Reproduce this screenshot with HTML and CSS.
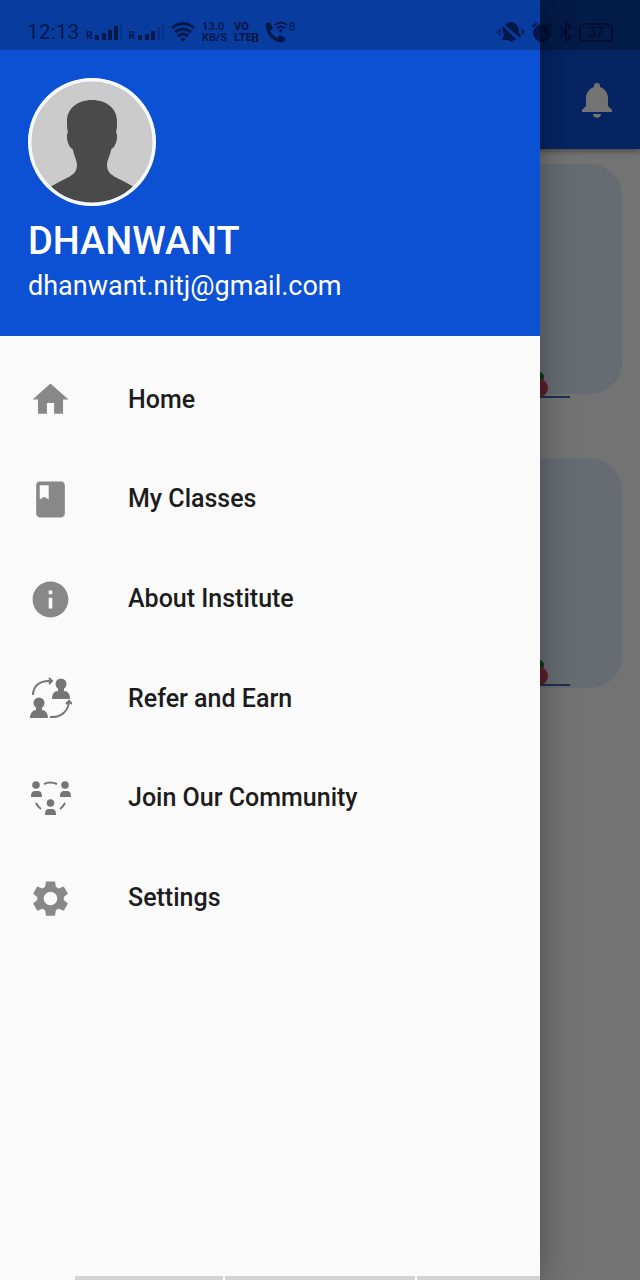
FILE: index.html
```
<!DOCTYPE html>
<html lang="en">
<head>
<meta charset="utf-8">
<meta name="viewport" content="width=device-width, initial-scale=1">
<title>Navigation drawer</title>
<link rel="stylesheet" href="styles.css">
</head>
<body>
<div class="screen">
  <main class="page">
    <header class="appbar">
      <button class="bell" type="button" aria-label="Notifications">
        <svg viewBox="0 0 30 36" width="30" height="36"><path d="M15 1a3 3 0 0 1 3 3v1c5 2 8 6 8 11v8l4 4v2H0v-2l4-4v-8C4 11 7 7 12 5V4a3 3 0 0 1 3-3zM11 32h8c0 5-8 5-8 0z"/></svg>
      </button>
    </header>
    <div class="cards">
      <section class="card">
        <svg class="card-art low" viewBox="0 0 40 30" width="40" height="30"><circle class="leaf" cx="9" cy="7" r="5"/><ellipse class="fruit" cx="10" cy="18" rx="8" ry="9"/><path class="shelf" d="M8 27h32"/></svg>
      </section>
      <section class="card">
        <svg class="card-art" viewBox="0 0 40 30" width="40" height="30"><circle class="leaf" cx="9" cy="7" r="5"/><ellipse class="fruit" cx="10" cy="18" rx="8" ry="9"/><path class="shelf" d="M8 27h32"/></svg>
      </section>
    </div>
  </main>

  <div class="scrim"></div>

  <aside class="drawer">
    <header class="profile">
      <svg class="avatar" viewBox="0 0 128 128" width="128" height="128">
        <defs><clipPath id="face"><circle cx="64" cy="64" r="62"/></clipPath></defs>
        <circle class="avatar-bg" cx="64" cy="64" r="64"/>
        <circle class="avatar-fill" cx="64" cy="64" r="61"/>
        <path class="avatar-person" clip-path="url(#face)" d="M64 22C49 22 39 31 39 43c0 5 0 8 1 11-2 3-1 9 1 13 1 3 3 3 4 5 1 6 4 10 4 15 0 8-6 11-12 14-6 3-10 5-15 8v20h84v-20c-5-3-9-5-15-8-6-3-12-6-12-14 0-5 3-9 4-15 1-2 3-2 4-5 2-4 3-10 1-13 1-3 1-6 1-11C89 31 79 22 64 22z"/>
        <circle class="avatar-ring" cx="64" cy="64" r="62"/>
      </svg>
      <h1 class="name">DHANWANT</h1>
      <p class="email">dhanwant.nitj@gmail.com</p>
    </header>
    <nav class="menu" aria-label="Main">
      <a class="item" href="#home">
        <svg class="icon" viewBox="0 0 24 24"><path d="M10 20v-6h4v6h5v-8h3L12 3 2 12h3v8z"/></svg>
        <span>Home</span>
      </a>
      <a class="item" href="#classes">
        <svg class="icon" viewBox="0 0 24 24"><path d="M18 2H6c-1.100 0-2 .9-2 2v16c0 1.100.9 2 2 2h12c1.100 0 2-.9 2-2V4c0-1.100-.9-2-2-2zM6 4h5v8l-2.500-1.500L6 12V4z"/></svg>
        <span>My Classes</span>
      </a>
      <a class="item" href="#about">
        <svg class="icon" viewBox="0 0 24 24"><path d="M12 2C6.480 2 2 6.480 2 12s4.480 10 10 10 10-4.480 10-10S17.520 2 12 2zm1 15h-2v-6h2v6zm0-8h-2V7h2v2z"/></svg>
        <span>About Institute</span>
      </a>
      <a class="item" href="#refer">
        <svg class="icon dark" viewBox="0 0 43 43"><circle cx="32" cy="7" r="5.500"/><path d="M29 10h6v4c4 0 6 3 6 8H23c0-5 2-8 6-8zM7 29h6v4c3 0 6 3 6 8H1c0-5 3-8 6-8z"/><circle cx="10" cy="26" r="5.500"/><path class="line" d="M4 18C4 9 11 3 22 4M20 1l3 3-3 3M21 40c10 1 18-5 19-15M37 27l3-3 3 3"/></svg>
        <span>Refer and Earn</span>
      </a>
      <a class="item" href="#community">
        <svg class="icon dark" viewBox="0 0 43 43"><circle cx="7" cy="8" r="3.800"/><circle cx="36" cy="8" r="3.800"/><circle cx="21.500" cy="26" r="3.800"/><path d="M2 20c0-4 1-6 4-6h3c3 0 4 2 4 6zM31 20c0-4 1-6 4-6h3c3 0 4 2 4 6zM16 38c0-4 1-6 4-6h3c3 0 4 2 4 6z"/><path class="line" d="M15 7q6-3 13 0M7 26q2 4 5 6M36 26q-2 4-5 6"/></svg>
        <span>Join Our Community</span>
      </a>
      <a class="item" href="#settings">
        <svg class="icon" viewBox="0 0 24 24"><path fill-rule="evenodd" d="M9.500 2.500h5l.5 3 1.500.9 2.900-1.100 2.300 4-2.300 1.900v1.700l2.300 1.900-2.300 4-2.900-1.100-1.500.9-.5 3h-5l-.5-3-1.500-.9-2.900 1.100-2.300-4 2.300-1.900v-1.700L2.300 9.300l2.300-4 2.900 1.100L9 5.500zM12 8.200a3.800 3.800 0 1 0 0 7.600 3.800 3.800 0 0 0 0-7.600z"/></svg>
        <span>Settings</span>
      </a>
    </nav>
    <div class="keys"><i class="key"></i><i class="key wide"></i><i class="key rest"></i></div>
  </aside>

  <div class="statusbar">
    <div class="status-left">
      <span class="clock">12:13</span>
      <span class="signal"><small>R</small><svg viewBox="0 0 29 18" width="29" height="18"><path d="M2 12h4v5H2zM9 10h4v7H9zM15 7h4v10h-4zM21 3h4v14h-4z"/><path class="faint" d="M27 0h2v17h-2z"/></svg></span>
      <span class="signal"><small>R</small><svg viewBox="0 0 29 18" width="29" height="18"><path d="M3 12h4v5H3zM10 11h4v6h-4zM16 8h4v9h-4z"/><path class="faint" d="M22 4h3v13h-3zM27 0h2v17h-2z"/></svg></span>
      <svg viewBox="0 0 24 20" width="24" height="20"><path class="stroke heavy" d="M1 6q11-9 22 0M4 10q8-6 16 0M7 14q5-4 10 0"/><path d="M9 17q3-2 6 0l-3 3z"/></svg>
      <span class="tiny"><span>13.0</span><span>KB/S</span></span>
      <span class="tiny bold"><span>VO</span><span class="lte">LTE<svg viewBox="0 0 6 9" width="6" height="9"><path fill-rule="evenodd" d="M0 0h6v9H0zM2 1v3h2V1zM2 5v3h2V5z"/></svg></span></span>
      <svg viewBox="0 0 32 22" width="32" height="22"><path d="M1 2l4-1 3 6-3 3q3 5 7 7l3-3 6 3-2 4C9 23-1 12 1 2z"/><path class="stroke" d="M10 4q6-5 12 0M12 7q4-3 8 0"/><path d="M14 9q2-2 4 0l-2 3z"/><path class="thin" d="M25 2h4v7h-4zM25 5h4"/></svg>
    </div>
    <div class="status-right">
      <svg viewBox="0 0 28 22" width="28" height="22"><path d="M9 3q5-4 10 0 3 3 3 8l2 5-1 1L8 4zM6 5l14 14h-3q-3 3-6 0H5l2-5q-2-5-1-9z"/><path class="thin" d="M1 9v4M3 7v8M25 7v7M27 9v4"/></svg>
      <svg viewBox="0 0 22 22" width="22" height="22"><path fill-rule="evenodd" d="M11 3a9 9 0 1 1 0 18 9 9 0 0 1 0-18zm-1 4v6l5 3 1-1-4-3V7z"/><path class="stroke" d="M1 6l5-4M21 6l-5-4"/></svg>
      <svg viewBox="0 0 14 22" width="14" height="22"><path class="stroke" d="M1 6l11 10-5 4V2l5 4L1 16"/></svg>
      <span class="battery">37</span>
    </div>
  </div>
</div>
</body>
</html>
```
FILE: styles.css
```
* { box-sizing: border-box; }
body {
  margin: 0;
  background: #fafafa;
  font-family: Roboto, "Liberation Sans", sans-serif;
}
h1, p { margin: 0; }
svg { display: block; }

.screen {
  position: relative;
  min-height: 100vh;
  overflow: hidden;
}

/* Page under the drawer */
.appbar {
  display: flex;
  align-items: flex-end;
  justify-content: flex-end;
  height: 149px;
  padding: 0 28px 31px 0;
  background: #0c50d4;
  box-shadow: 0 2px 6px rgba(0, 0, 0, .4);
}
.bell { padding: 0; border: 0; background: none; fill: #fafafa; }
.cards {
  display: grid;
  gap: 64px;
  padding: 15px 18px;
}
.card {
  display: flex;
  align-items: flex-end;
  justify-content: flex-end;
  height: 230px;
  padding-right: 52px;
  border-radius: 32px;
  background: #e0ebfa;
}
.card-art.low { margin-bottom: -6px; }
.leaf { fill: #1c7a3c; }
.fruit { fill: #c8405c; }
.shelf { stroke: #4468b8; stroke-width: 2; }

.scrim {
  position: absolute;
  inset: 0;
  background: rgba(0, 0, 0, .54);
}

/* Drawer */
.drawer {
  position: absolute;
  top: 0;
  bottom: 0;
  left: 0;
  display: flex;
  flex-direction: column;
  width: calc(100% - 100px);
  background: #fafafa;
  box-shadow: 0 0 32px rgba(0, 0, 0, .35);
}
.profile {
  padding: 78px 28px 34px;
  background: #0c50d4;
  color: #fff;
}
.avatar-bg { fill: #fff; }
.avatar-fill { fill: #cbcbcb; }
.avatar-person { fill: #4a4a4a; }
.avatar-ring { fill: none; stroke: #f4f8ff; stroke-width: 3; }
.name {
  margin-top: 12px;
  font-size: 38px;
  font-weight: 500;
  line-height: 46px;
}
.email {
  margin-top: 6px;
  font-size: 27px;
  line-height: 32px;
}
.menu {
  display: grid;
  grid-auto-rows: 1fr;
  height: 598px;
  margin-top: 14px;
}
.item {
  display: grid;
  grid-template-columns: 43px 1fr;
  column-gap: 56px;
  align-items: center;
  padding-left: 29px;
  color: #1c1c1c;
  font-size: 25px;
  font-weight: 500;
  line-height: 32px;
  text-decoration: none;
}
.icon { width: 43px; height: 43px; fill: #888; }
.icon.dark { fill: #757575; }
.line { fill: none; stroke: #757575; stroke-width: 2; }
.keys {
  display: flex;
  gap: 2px;
  height: 4px;
  margin-top: auto;
  padding-left: 75px;
}
.key { width: 148px; background: #d3d3d3; }
.key.wide { width: 190px; }
.key.rest { width: auto; flex: 1; }

/* System status bar */
.statusbar {
  position: absolute;
  inset: 0 0 auto;
  display: flex;
  justify-content: space-between;
  height: 50px;
  padding: 14px 27px 0;
  background: rgba(0, 0, 0, .25);
  color: rgba(0, 8, 40, .7);
  fill: currentColor;
}
.status-left, .status-right { display: flex; align-items: center; height: 36px; }
.status-left { gap: 7px; }
.status-right { gap: 6px; }
.clock { font-size: 21px; }
.signal { display: flex; align-items: flex-end; height: 18px; }
.signal small { font-size: 10px; font-weight: 700; line-height: 10px; }
.faint { opacity: .25; }
.stroke { fill: none; stroke: currentColor; stroke-width: 2; }
.stroke.heavy { stroke-width: 3; }
.thin { fill: none; stroke: currentColor; stroke-width: 1; }
.tiny {
  display: grid;
  font-size: 11px;
  font-weight: 700;
  line-height: 11px;
}
.bold { font-weight: 900; }
.lte { display: flex; align-items: center; }
.battery {
  width: 34px;
  border: 2px solid;
  border-radius: 5px;
  font-size: 14px;
  font-weight: 700;
  line-height: 15px;
  text-align: center;
}
```
